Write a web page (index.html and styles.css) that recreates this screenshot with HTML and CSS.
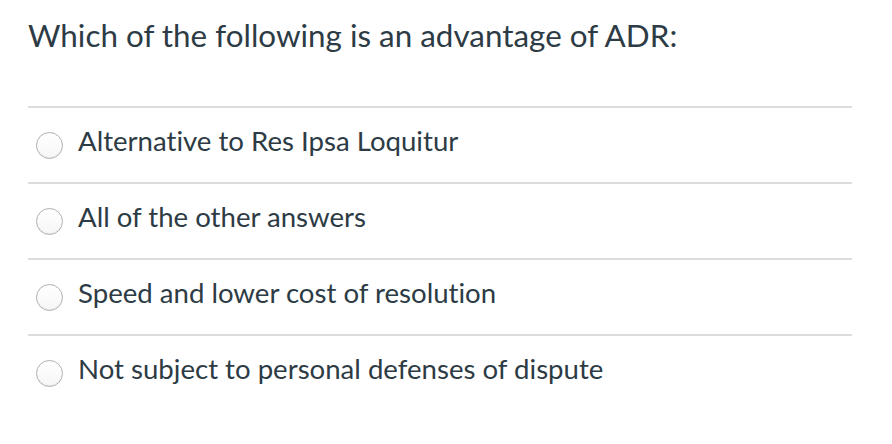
FILE: index.html
```html
<!DOCTYPE html>
<html lang="en">
<head>
<meta charset="utf-8">
<title>Quiz question</title>
<link rel="stylesheet" href="styles.css">
</head>
<body>
<div class="question">
  <h1 class="question-text">Which of the following is an advantage of ADR:</h1>
  <div class="answers">
    <label class="answer"><span class="radio"></span><span class="answer-text">Alternative to Res Ipsa Loquitur</span></label>
    <label class="answer"><span class="radio"></span><span class="answer-text">All of the other answers</span></label>
    <label class="answer"><span class="radio"></span><span class="answer-text">Speed and lower cost of resolution</span></label>
    <label class="answer"><span class="radio"></span><span class="answer-text">Not subject to personal defenses of dispute</span></label>
  </div>
</div>
</body>
</html>
```
FILE: styles.css
```css
html, body {
  margin: 0;
  padding: 0;
  background: #ffffff;
}
body {
  font-family: Lato, "Open Sans", sans-serif;
  color: #2d3b45;
  font-variant-ligatures: none;
}
.question {
  padding: 16px 40px 0 28px;
}
.question-text {
  margin: 0;
  font-size: 31.4px;
  font-weight: 400;
  line-height: 38px;
}
.answers {
  margin-top: 52px;
}
.answer {
  display: flex;
  align-items: center;
  height: 74px;
  border-top: 2px solid #dcdcdc;
}
.radio {
  flex: none;
  box-sizing: border-box;
  width: 27px;
  height: 27px;
  margin-left: 8px;
  margin-right: 15px;
  border-radius: 50%;
  border: 1px solid #b0b0b0;
  background: linear-gradient(#ffffff, #f6f6f6);
  box-shadow: inset 0 -1px 1px rgba(0,0,0,0.05);
}
.answer-text {
  font-size: 27.6px;
  line-height: 34px;
  margin-bottom: 8px;
}
```
